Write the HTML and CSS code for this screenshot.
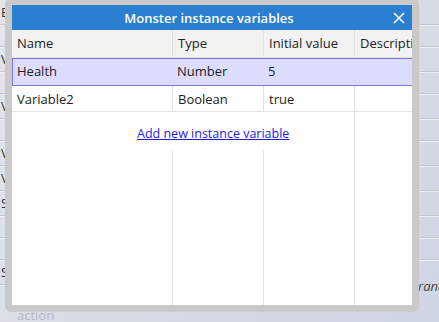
FILE: index.html
```html
<!DOCTYPE html>
<html lang="en">
<head>
<meta charset="UTF-8">
<title>Monster instance variables</title>
<link rel="stylesheet" href="styles.css">
</head>
<body>

<!-- app behind the dialog -->
<div class="app">
  <div class="app-row"><span>B</span></div>
  <div class="app-row short"></div>
  <div class="app-row"><span>V</span></div>
  <div class="app-row short"></div>
  <div class="app-row"><span>V</span></div>
  <div class="app-row short"></div>
  <div class="app-row"><span>V</span></div>
  <div class="app-row"><span>V</span></div>
  <div class="app-row"><span>S</span></div>
  <div class="app-row short"></div>
  <div class="app-row short"></div>
  <div class="app-row"><span>S</span><em class="app-note">rand</em></div>
  <div class="app-row last"><span class="app-action">action</span></div>
</div>

<!-- Modal -->
<div class="dialog">
  <div class="dialog-inner">
    <div class="titlebar">
      <span class="title">Monster instance variables</span>
      <svg class="close" width="12" height="12" viewBox="0 0 12 12">
        <path d="M1 1 L11 11 M11 1 L1 11" stroke="#fff" stroke-width="1.6" fill="none"/>
      </svg>
    </div>
    <div class="grid">
      <div class="cell head first">Name</div>
      <div class="cell head">Type</div>
      <div class="cell head">Initial value</div>
      <div class="cell head">Description</div>

      <div class="row selected">
        <div class="cell first">Health</div>
        <div class="cell">Number</div>
        <div class="cell">5</div>
        <div class="cell last"></div>
      </div>

      <div class="cell first">Variable2</div>
      <div class="cell">Boolean</div>
      <div class="cell">true</div>
      <div class="cell"></div>

      <div class="add-row"><a href="#">Add new instance variable</a></div>
      <div class="cell filler"></div>

      <div class="cell filler first"></div>
      <div class="cell filler"></div>
      <div class="cell filler"></div>
      <div class="cell filler"></div>
    </div>
  </div>
</div>

</body>
</html>
```

FILE: styles.css
```css
body {
  margin: 0;
  width: 439px;
  height: 322px;
  overflow: hidden;
  font-family: "Open Sans", "Noto Sans", sans-serif;
  font-size: 13px;
  color: #222;
  background: linear-gradient(135deg, #e4e6ea 0%, #d7dbe4 60%, #cfd5e2 100%);
}
.app {
  display: flex;
  flex-direction: column;
  height: 322px;
  overflow: hidden;
}
.app-row {
  height: 24px;
  flex: none;
  border-bottom: 1px solid #c2c6ce;
  box-shadow: 0 1px 0 #eceef2;
  position: relative;
  padding-left: 1px;
  line-height: 24px;
  color: #333;
}
.app-row.short {
  height: 21px;
}
.app-row.last {
  border-bottom: none;
  box-shadow: none;
  height: 30px;
  line-height: 60px;
}
.app-note {
  position: absolute;
  left: 418px;
  top: 14px;
  color: #444;
}
.app-action {
  color: #b4bac6;
  padding-left: 16px;
}
.dialog {
  position: absolute;
  left: 5px;
  top: -2px;
  width: 400px;
  height: 300px;
  border: 7px solid #c9c9c9;
  border-radius: 6px;
  background: #c9c9c9;
}
.dialog-inner {
  width: 400px;
  height: 300px;
  background: #fff;
  overflow: hidden;
  display: flex;
  flex-direction: column;
}
.titlebar {
  height: 25px;
  flex: none;
  background: #2a7fd0;
  color: #fff;
  display: flex;
  align-items: center;
  justify-content: center;
  position: relative;
}
.title {
  font-weight: 600;
  padding-right: 6px;
}
.close {
  position: absolute;
  right: 7px;
  top: 7px;
}
.grid {
  flex: 1;
  display: grid;
  grid-template-columns: 160px 91px 91px 100px;
  grid-template-rows: 28px 28px 26px 38px 1fr;
}
.row {
  display: contents;
}
.cell {
  padding-left: 5px;
  border-left: 1px solid #e2e2e2;
  border-bottom: 1px solid #e2e2e2;
  line-height: 26px;
  white-space: nowrap;
  overflow: hidden;
}
.cell.first {
  border-left: none;
}
.head {
  background: #f2f2f2;
  line-height: 27px;
}
.selected .cell {
  background: #dcdcff;
  border-top: 1px solid #7676f2;
  border-bottom: 1px solid #7676f2;
  border-left: none;
  line-height: 25px;
}
.selected .cell.first {
  border-left: 1px solid #7676f2;
  padding-left: 4px;
}
.selected .cell.last {
  border-right: 1px solid #7676f2;
}
.add-row {
  grid-column: 1 / 4;
  padding-left: 125px;
  padding-top: 13px;
  background: #fff;
  font-size: 12.5px;
}
.add-row a {
  color: #1a1aee;
}
.filler {
  border-bottom: none;
}
```
